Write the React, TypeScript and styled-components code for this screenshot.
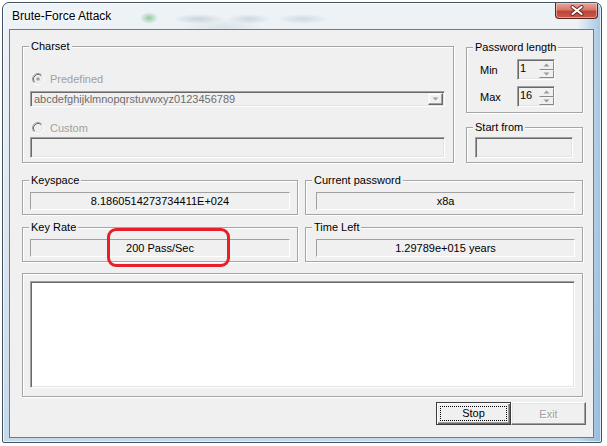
import React from 'react';
import styled, { createGlobalStyle } from 'styled-components';

const GlobalStyle = createGlobalStyle`
  body {
    margin: 0;
    background: #ffffff;
    font-family: 'Liberation Sans', Arial, sans-serif;
  }
`;

const Window = styled.div`
  margin: 2px 0 0 2px;
  width: 600px;
  height: 441px;
  box-sizing: border-box;
  border: 1px solid #43525f;
  border-radius: 7px 7px 2px 2px;
  display: flex;
  flex-direction: column;
  overflow: hidden;
  background:
    linear-gradient(to right, rgba(255, 255, 255, 0) 0, rgba(255, 255, 255, 0) 96%, rgba(110, 165, 210, 0.55) 100%),
    linear-gradient(to bottom, #eef3f7 0, #dfe8f0 45%, #c4d9ea 100%);
  box-shadow: inset 0 0 0 1px rgba(255, 255, 255, 0.7);
`;

const TitleBar = styled.div`
  height: 26px;
  flex: none;
  display: flex;
  align-items: flex-start;
  justify-content: space-between;
  padding: 0 3px 0 9px;
  background:
    radial-gradient(ellipse 9px 6px at 146px 15px, rgba(40, 150, 60, 0.45), transparent),
    radial-gradient(ellipse 26px 5px at 196px 16px, rgba(80, 100, 120, 0.22), transparent),
    radial-gradient(ellipse 22px 5px at 246px 16px, rgba(80, 100, 120, 0.2), transparent),
    radial-gradient(ellipse 26px 5px at 300px 16px, rgba(80, 100, 120, 0.18), transparent),
    radial-gradient(ellipse 40px 8px at 220px 24px, rgba(120, 140, 160, 0.15), transparent);
`;

const Title = styled.span`
  margin-top: 6px;
  font-size: 12px;
  line-height: 15px;
  color: #000000;
  text-shadow: 0 0 5px #ffffff, 0 0 3px #ffffff;
`;

const CloseButton = styled.div`
  width: 43px;
  height: 16px;
  box-sizing: border-box;
  border: 1px solid #5b2620;
  border-top: none;
  border-radius: 0 0 4px 4px;
  background: linear-gradient(to bottom, #e8a89a 0, #d47a6a 45%, #c0443a 55%, #c95a48 100%);
  box-shadow: inset 0 0 0 1px rgba(255, 220, 210, 0.5);
  display: flex;
  align-items: center;
  justify-content: center;
`;

const Client = styled.div`
  margin: 0 7px 0 6px;
  height: 409px;
  flex: none;
  box-sizing: border-box;
  border: 1px solid #6b7b8b;
  background: #f0f0f0;
  padding: 16px 10px 0 12px;
  display: flex;
  flex-direction: column;
  font-size: 11px;
  color: #000000;
`;

const TopRow = styled.div`
  display: flex;
  gap: 12px;
`;

const RightColumn = styled.div`
  width: 117px;
  margin-top: 1px;
  display: flex;
  flex-direction: column;
  gap: 14px;
`;

const GroupBox = styled.div<{ $w?: number; $h: number }>`
  position: relative;
  width: ${p => (p.$w ? `${p.$w}px` : 'auto')};
  height: ${p => p.$h}px;
  box-sizing: border-box;
  border: 1px solid #a5a5a5;
  box-shadow: inset 1px 1px 0 #ffffff, 1px 1px 0 #ffffff;
  display: flex;
  flex-direction: column;
`;

const Caption = styled.span`
  align-self: flex-start;
  margin: -7px 0 0 6px;
  padding: 0 2px;
  background: #f0f0f0;
  line-height: 13px;
`;

const GroupBody = styled.div<{ $pad: string }>`
  flex: 1;
  padding: ${p => p.$pad};
  display: flex;
  flex-direction: column;
`;

const RadioRow = styled.div<{ $mt: number }>`
  margin-top: ${p => p.$mt}px;
  height: 14px;
  padding-left: 2px;
  display: flex;
  align-items: center;
  gap: 6px;
  color: #a0a0a0;
`;

const Sunken = styled.div<{ $h: number; $mt: number }>`
  margin-top: ${p => p.$mt}px;
  height: ${p => p.$h}px;
  box-sizing: border-box;
  border-style: solid;
  border-width: 1px;
  border-color: #a0a0a0 #ffffff #ffffff #a0a0a0;
  box-shadow: inset 1px 1px 0 #696969, inset -1px -1px 0 #e3e3e3;
  background: #f0f0f0;
`;

const Combo = styled(Sunken)`
  display: flex;
  align-items: center;
  padding: 0 1px 0 3px;
  color: #6d6d6d;
`;

const ComboText = styled.span`
  flex: 1;
  line-height: 12px;
`;

const DropButton = styled.div`
  width: 15px;
  height: 12px;
  box-sizing: border-box;
  border-style: solid;
  border-width: 1px;
  border-color: #f4f4f4 #696969 #696969 #f4f4f4;
  box-shadow: inset -1px -1px 0 #a0a0a0, inset 1px 1px 0 #ffffff;
  background: #f0f0f0;
  display: flex;
  align-items: center;
  justify-content: center;
`;

const SpinRow = styled.div<{ $mt: number }>`
  margin-top: ${p => p.$mt}px;
  height: 21px;
  display: flex;
  align-items: center;
`;

const SpinLabel = styled.span`
  width: 37px;
`;

const SpinBox = styled(Sunken)`
  width: 38px;
  display: flex;
  padding: 1px 0 1px 2px;
`;

const SpinValue = styled.span`
  flex: 1;
  line-height: 15px;
`;

const SpinButtons = styled.div`
  width: 15px;
  display: flex;
  flex-direction: column;
`;

const SpinButton = styled.div`
  flex: 1;
  box-sizing: border-box;
  border-style: solid;
  border-width: 1px;
  border-color: #f4f4f4 #8a8a8a #8a8a8a #f4f4f4;
  background: #f0f0f0;
  display: flex;
  align-items: center;
  justify-content: center;
`;

const ValueGrid = styled.div`
  margin-top: 17px;
  display: grid;
  grid-template-columns: 276px 278px;
  column-gap: 7px;
  row-gap: 12px;
`;

const ValueBox = styled.div`
  margin-top: 5px;
  height: 18px;
  box-sizing: border-box;
  border-style: solid;
  border-width: 1px;
  border-color: #a0a0a0 #ffffff #ffffff #a0a0a0;
  text-align: center;
  line-height: 16px;
`;

const Highlight = styled.div`
  position: absolute;
  left: 84px;
  top: 0;
  width: 123px;
  height: 39px;
  box-sizing: border-box;
  border: 3px solid #e61f28;
  border-radius: 9px;
  pointer-events: none;
`;

const LogGroup = styled(GroupBox)`
  margin-top: 11px;
`;

const Memo = styled.div`
  flex: 1;
  box-sizing: border-box;
  border-style: solid;
  border-width: 1px;
  border-color: #a0a0a0 #ffffff #ffffff #a0a0a0;
  box-shadow: inset 1px 1px 0 #696969, inset -1px -1px 0 #e3e3e3;
  background: #ffffff;
`;

const ButtonRow = styled.div`
  margin: 5px -3px 0 0;
  display: flex;
  justify-content: flex-end;
`;

const Button = styled.div`
  width: 75px;
  height: 23px;
  box-sizing: border-box;
  background: #f0f0f0;
  display: flex;
  align-items: stretch;
  justify-content: center;
`;

const StopButton = styled(Button)`
  border: 1px solid #3c3c3c;
  box-shadow: inset 1px 1px 0 #ffffff, inset -1px -1px 0 #696969, inset -2px -2px 0 #a0a0a0;
  padding: 3px;
`;

const FocusRing = styled.span`
  flex: 1;
  border: 1px dotted #000000;
  display: flex;
  align-items: center;
  justify-content: center;
  line-height: 13px;
`;

const ExitButton = styled(Button)`
  border-style: solid;
  border-width: 1px;
  border-color: #ffffff #696969 #696969 #ffffff;
  box-shadow: inset -1px -1px 0 #a0a0a0, inset 1px 1px 0 #e3e3e3;
  align-items: center;
  color: #a0a0a0;
  text-shadow: 1px 1px 0 #ffffff;
`;

const Radio = ({ checked }: { checked?: boolean }) => (
  <svg width="12" height="12" viewBox="0 0 12 12">
    <circle cx="6" cy="6" r="5.5" fill="#f0f0f0" />
    <path d="M2.11 9.89 A5.5 5.5 0 0 1 9.89 2.11" stroke="#a0a0a0" fill="none" />
    <path d="M2.11 9.89 A5.5 5.5 0 0 0 9.89 2.11" stroke="#ffffff" fill="none" />
    <path d="M2.82 9.18 A4.5 4.5 0 0 1 9.18 2.82" stroke="#696969" fill="none" />
    <path d="M2.82 9.18 A4.5 4.5 0 0 0 9.18 2.82" stroke="#e3e3e3" fill="none" />
    {checked && <circle cx="6" cy="6" r="1.8" fill="#a0a0a0" />}
  </svg>
);

const Arrow = ({ up, color }: { up?: boolean; color: string }) => (
  <svg width="7" height="4" viewBox="0 0 7 4">
    <path d={up ? 'M0.5 3.5 L3.5 0.5 L6.5 3.5 Z' : 'M0.5 0.5 L3.5 3.5 L6.5 0.5 Z'} fill={color} />
  </svg>
);

const Spin = ({ label, value, mt }: { label: string; value: string; mt: number }) => (
  <SpinRow $mt={mt}>
    <SpinLabel>{label}</SpinLabel>
    <SpinBox $h={21} $mt={0}>
      <SpinValue>{value}</SpinValue>
      <SpinButtons>
        <SpinButton><Arrow up color="#9a9a9a" /></SpinButton>
        <SpinButton><Arrow color="#9a9a9a" /></SpinButton>
      </SpinButtons>
    </SpinBox>
  </SpinRow>
);

const ValueGroup = ({ title, value, pad, children }: { title: string; value: string; pad: string; children?: React.ReactNode }) => (
  <GroupBox $h={35}>
    <Caption>{title}</Caption>
    <GroupBody $pad={pad}>
      <ValueBox>{value}</ValueBox>
    </GroupBody>
    {children}
  </GroupBox>
);

export default function App() {
  return (
    <>
      <GlobalStyle />
      <Window>
        <TitleBar>
          <Title>Brute-Force Attack</Title>
          <CloseButton>
            <svg width="14" height="11" viewBox="0 0 14 11">
              <path d="M2.5 2 L11.5 9 M11.5 2 L2.5 9" stroke="#6a2218" strokeWidth="4" strokeLinecap="round" />
              <path d="M2.5 2 L11.5 9 M11.5 2 L2.5 9" stroke="#ffffff" strokeWidth="2.2" strokeLinecap="round" />
            </svg>
          </CloseButton>
        </TitleBar>
        <Client>
          <TopRow>
            <GroupBox $w={432} $h={117}>
              <Caption>Charset</Caption>
              <GroupBody $pad="0 8px 0 7px">
                <RadioRow $mt={19}>
                  <Radio checked />
                  Predefined
                </RadioRow>
                <Combo $h={16} $mt={5}>
                  <ComboText>abcdefghijklmnopqrstuvwxyz0123456789</ComboText>
                  <DropButton><Arrow color="#a0a0a0" /></DropButton>
                </Combo>
                <RadioRow $mt={14}>
                  <Radio />
                  Custom
                </RadioRow>
                <Sunken $h={21} $mt={2} />
              </GroupBody>
            </GroupBox>
            <RightColumn>
              <GroupBox $h={66}>
                <Caption>Password length</Caption>
                <GroupBody $pad="0 0 0 13px">
                  <Spin label="Min" value="1" mt={5} />
                  <Spin label="Max" value="16" mt={6} />
                </GroupBody>
              </GroupBox>
              <GroupBox $h={36}>
                <Caption>Start from</Caption>
                <GroupBody $pad="0 9px 0 8px">
                  <Sunken $h={21} $mt={3} />
                </GroupBody>
              </GroupBox>
            </RightColumn>
          </TopRow>
          <ValueGrid>
            <ValueGroup title="Keyspace" value="8.1860514273734411E+024" pad="0 7px 0 7px" />
            <ValueGroup title="Current password" value="x8a" pad="0 7px 0 10px" />
            <ValueGroup title="Key Rate" value="200 Pass/Sec" pad="0 7px 0 7px">
              <Highlight />
            </ValueGroup>
            <ValueGroup title="Time Left" value="1.29789e+015 years" pad="0 7px 0 10px" />
          </ValueGrid>
          <LogGroup $h={124}>
            <GroupBody $pad="7px 7px 8px 7px">
              <Memo />
            </GroupBody>
          </LogGroup>
          <ButtonRow>
            <StopButton>
              <FocusRing>Stop</FocusRing>
            </StopButton>
            <ExitButton>Exit</ExitButton>
          </ButtonRow>
        </Client>
      </Window>
    </>
  );
}
